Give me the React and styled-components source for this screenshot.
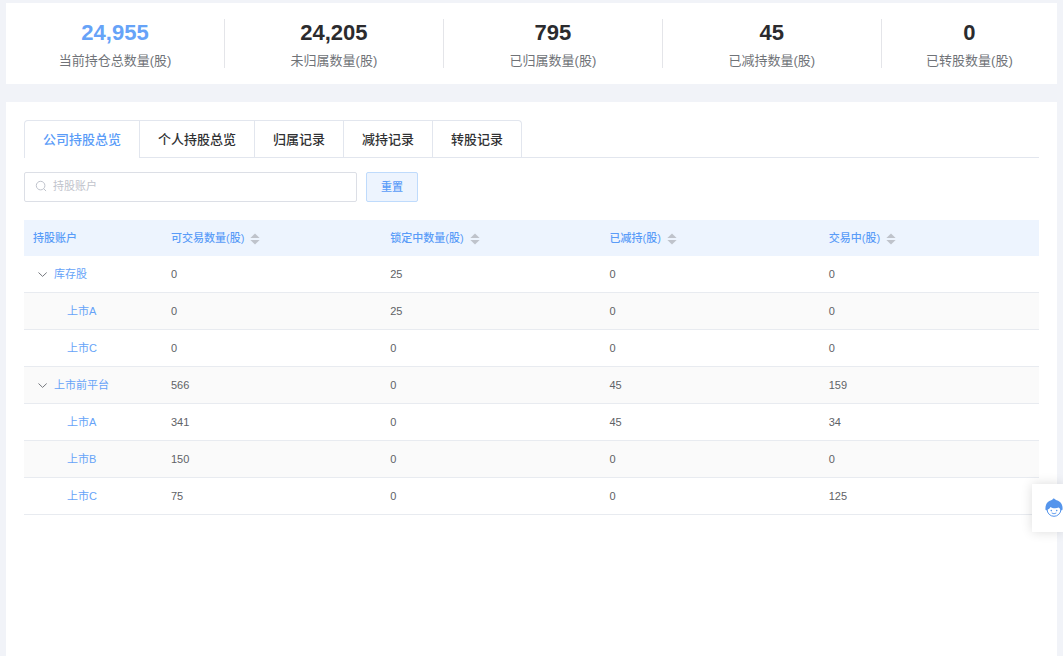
import React, { useState } from 'react';
import styled, { createGlobalStyle } from 'styled-components';

const GlobalStyle = createGlobalStyle`
    * {
        box-sizing: border-box;
    }
    body {
        margin: 0;
        background: #f1f3f8;
        color: #606266;
        font-family: "Liberation Sans", "Noto Sans CJK SC", sans-serif;
        font-size: 11px;
    }
    button, input {
        font-family: inherit;
    }
`;

const Page = styled.div`
    display: flex;
    flex-direction: column;
    gap: 18px;
    min-height: 100vh;
    padding: 3px 6px 0;
`;

const Stats = styled.section`
    display: grid;
    grid-template-columns: 5fr 5fr 5fr 5fr 4fr;
    padding: 16px 0;
    background: #fff;
`;

const Stat = styled.div`
    height: 49px;
    text-align: center;
    border-right: 1px solid #e4e5e9;

    &:last-child {
        border-right: none;
    }
`;

const StatValue = styled.div`
    color: ${props => props.$primary ? '#66a3f8' : '#2b2b2e'};
    font-size: 22px;
    font-weight: bold;
    line-height: 28px;
`;

const StatLabel = styled.div`
    color: #707378;
    font-size: 13px;
    line-height: 28px;
`;

const Panel = styled.main`
    flex: 1;
    padding: 18px;
    background: #fff;
`;

const TabBar = styled.div`
    display: flex;
    border-bottom: 1px solid #e2e6ee;
`;

const TabList = styled.div`
    display: flex;
    margin-bottom: -1px;
    border: 1px solid #e2e6ee;
    border-bottom: none;
    border-radius: 4px 4px 0 0;
`;

const Tab = styled.button`
    height: 37px;
    padding: 0 18px 2px;
    border: none;
    border-left: 1px solid #e2e6ee;
    border-bottom: 1px solid ${props => props.$active ? '#fff' : '#e2e6ee'};
    background: none;
    color: ${props => props.$active ? '#5a9cf8' : '#303133'};
    font-size: 13px;
    font-weight: 500;
    cursor: pointer;

    &:first-child {
        border-left: none;
    }
`;

const Filters = styled.form`
    display: flex;
    gap: 9px;
    margin: 14px 0 18px;
`;

const SearchBox = styled.label`
    display: flex;
    align-items: center;
    gap: 6px;
    flex: 0 1 333px;
    height: 30px;
    padding: 0 10px 2px;
    border: 1px solid #dcdfe6;
    border-radius: 2px;
    color: #bfc3cc;
`;

const SearchInput = styled.input`
    flex: 1;
    min-width: 0;
    padding: 0;
    border: none;
    outline: none;
    background: none;
    color: #606266;
    font-size: 11px;

    &::placeholder {
        color: #bfc3cc;
    }
`;

const ResetButton = styled.button`
    width: 52px;
    height: 30px;
    padding: 0 0 2px;
    border: 1px solid #bfdbfc;
    border-radius: 2px;
    background: #edf4fe;
    color: #5a9cf8;
    font-size: 11px;
    font-weight: 500;
    cursor: pointer;
`;

const Table = styled.table`
    width: 100%;
    table-layout: fixed;
    border-collapse: separate;
    border-spacing: 0;
`;

const HeadCell = styled.th`
    width: ${props => props.$width || 'auto'};
    height: 36px;
    padding: 0 9px;
    background: #edf4fe;
    color: #5a9cf8;
    font-weight: 500;
    line-height: 16px;
    text-align: left;
`;

const SortButton = styled.button`
    display: inline-flex;
    margin-left: 6px;
    padding: 0;
    border: none;
    background: none;
    color: #bfc3cb;
    vertical-align: middle;
    cursor: pointer;
`;

const Row = styled.tr`
    height: 37px;

    &:nth-child(even) {
        background: #fafafa;
    }
`;

const Cell = styled.td`
    padding: 0 9px;
    border-bottom: 1px solid #e8ebf0;
    line-height: 16px;
`;

const Account = styled.div`
    display: flex;
    align-items: center;
    gap: 6px;
    padding-left: ${props => props.$group ? 4 : 34}px;
`;

const Expand = styled.button`
    display: flex;
    padding: 0;
    border: none;
    background: none;
    color: #75787e;
    cursor: pointer;
`;

const AccountLink = styled.a`
    color: #66a3f8;
    text-decoration: none;
`;

const Helper = styled.button`
    position: fixed;
    right: 0;
    bottom: 124px;
    display: flex;
    align-items: center;
    height: 48px;
    padding: 0 0 0 13px;
    border: none;
    background: #fff;
    box-shadow: 0 0 12px rgba(0, 0, 0, 0.14);
    cursor: pointer;
`;

const stats = [
    { value: '24,955', label: '当前持仓总数量(股)' },
    { value: '24,205', label: '未归属数量(股)' },
    { value: '795', label: '已归属数量(股)' },
    { value: '45', label: '已减持数量(股)' },
    { value: '0', label: '已转股数量(股)' },
];

const tabs = ['公司持股总览', '个人持股总览', '归属记录', '减持记录', '转股记录'];

const columns = ['可交易数量(股)', '锁定中数量(股)', '已减持(股)', '交易中(股)'];

const accounts = [
    { name: '库存股', group: true, values: [0, 25, 0, 0] },
    { name: '上市A', values: [0, 25, 0, 0] },
    { name: '上市C', values: [0, 0, 0, 0] },
    { name: '上市前平台', group: true, values: [566, 0, 45, 159] },
    { name: '上市A', values: [341, 0, 45, 34] },
    { name: '上市B', values: [150, 0, 0, 0] },
    { name: '上市C', values: [75, 0, 0, 125] },
];

function SearchIcon() {
    return (
        <svg width="12" height="12" viewBox="0 0 12 12" fill="none" stroke="currentColor" aria-hidden="true">
            <circle cx="5.6" cy="5.6" r="4.3" />
            <path d="M8.8 8.8 L10.8 10.8" strokeLinecap="round" />
        </svg>
    );
}

function SortIcon() {
    return (
        <svg width="10" height="12" viewBox="0 0 10 12" fill="currentColor" aria-hidden="true">
            <path d="M5 0.4 L9.6 5 H0.4 Z" />
            <path d="M5 11.6 L0.4 7 H9.6 Z" />
        </svg>
    );
}

function ChevronIcon() {
    return (
        <svg width="11" height="11" viewBox="0 0 11 11" fill="none" stroke="currentColor" aria-hidden="true">
            <path d="M1.8 3.8 L5.6 7.4 L9.4 3.8" strokeLinecap="round" strokeLinejoin="round" />
        </svg>
    );
}

function HelperIcon() {
    return (
        <svg width="18" height="20" viewBox="0 0 18 20" aria-hidden="true">
            <circle cx="9" cy="11.4" r="6.9" fill="#fff" stroke="#5595ec" strokeWidth="1" />
            <path
                d="M0.6 12 C-0.1 8.4 1.2 4.6 4.8 2.8 C6.2 2.2 7.2 1.9 7.8 0.9 C8.5 0.4 9.4 0.5 10 1.2 C10.7 2.1 12.2 2.2 13.5 3 C16.9 4.9 18.1 8.4 17.4 12 L15.6 12.4 C15.4 11.2 14.8 10.3 13.8 9.6 C10.5 10.8 7.2 10.2 5.4 9 C4.8 10.4 3.8 11.2 2.5 11.6 L2.3 12.4 Z"
                fill="#5595ec"
            />
            <circle cx="6.3" cy="12.6" r="0.8" fill="#5595ec" />
            <circle cx="11.7" cy="12.6" r="0.8" fill="#5595ec" />
            <path d="M7 15.2 Q9 16.6 11 15.2" fill="none" stroke="#5595ec" strokeWidth="0.9" strokeLinecap="round" />
        </svg>
    );
}

function Summary() {
    return (
        <Stats>
            {stats.map((item, i) => (
                <Stat key={item.label}>
                    <StatValue $primary={i === 0}>{item.value}</StatValue>
                    <StatLabel>{item.label}</StatLabel>
                </Stat>
            ))}
        </Stats>
    );
}

function HoldingsTable() {
    return (
        <Table>
            <thead>
                <tr>
                    <HeadCell $width="138px">持股账户</HeadCell>
                    {columns.map(name => (
                        <HeadCell key={name}>
                            {name}
                            <SortButton type="button" aria-label={`${name} 排序`}><SortIcon /></SortButton>
                        </HeadCell>
                    ))}
                </tr>
            </thead>
            <tbody>
                {accounts.map((account, i) => (
                    <Row key={i}>
                        <Cell>
                            <Account $group={account.group}>
                                {account.group && (
                                    <Expand type="button" aria-label="收起"><ChevronIcon /></Expand>
                                )}
                                <AccountLink href="#">{account.name}</AccountLink>
                            </Account>
                        </Cell>
                        {account.values.map((value, j) => <Cell key={j}>{value}</Cell>)}
                    </Row>
                ))}
            </tbody>
        </Table>
    );
}

function App() {
    const [active, setActive] = useState(0);
    const [keyword, setKeyword] = useState('');

    return (
        <>
            <GlobalStyle />
            <Page>
                <Summary />
                <Panel>
                    <TabBar>
                        <TabList role="tablist">
                            {tabs.map((name, i) => (
                                <Tab
                                    key={name}
                                    type="button"
                                    role="tab"
                                    aria-selected={i === active}
                                    $active={i === active}
                                    onClick={() => setActive(i)}
                                >
                                    {name}
                                </Tab>
                            ))}
                        </TabList>
                    </TabBar>
                    <Filters onSubmit={e => e.preventDefault()}>
                        <SearchBox>
                            <SearchIcon />
                            <SearchInput
                                type="text"
                                aria-label="持股账户"
                                placeholder="持股账户"
                                value={keyword}
                                onChange={e => setKeyword(e.target.value)}
                            />
                        </SearchBox>
                        <ResetButton type="button" onClick={() => setKeyword('')}>重置</ResetButton>
                    </Filters>
                    <HoldingsTable />
                </Panel>
            </Page>
            <Helper type="button" aria-label="客服"><HelperIcon /></Helper>
        </>
    );
}

export default App;
